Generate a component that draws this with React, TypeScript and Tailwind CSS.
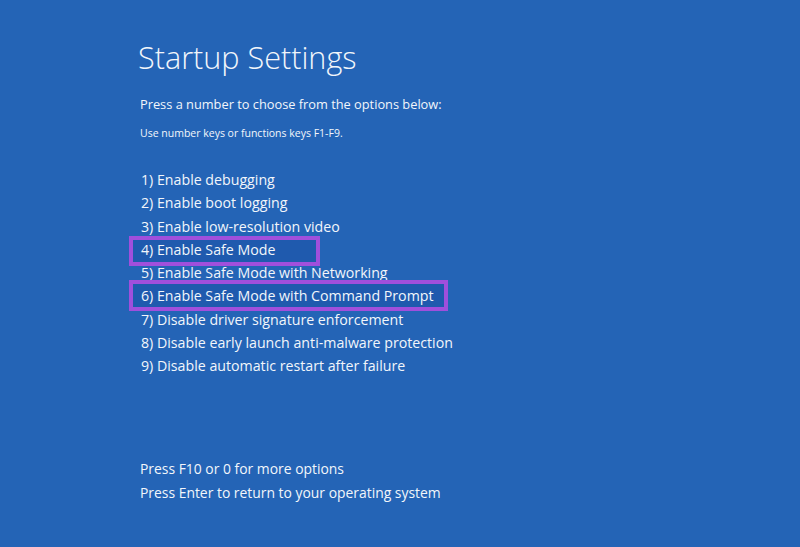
export default function App() {
  const items = [
    "1) Enable debugging",
    "2) Enable boot logging",
    "3) Enable low-resolution video",
    "4) Enable Safe Mode",
    "5) Enable Safe Mode with Networking",
    "6) Enable Safe Mode with Command Prompt",
    "7) Disable driver signature enforcement",
    "8) Disable early launch anti-malware protection",
    "9) Disable automatic restart after failure",
  ];
  return (
    <div
      className="w-[800px] h-[547px] bg-[#2464b6] text-[#f2f6fb] overflow-hidden pl-[138px] pt-[37px] flex flex-col"
      style={{ fontFamily: '"Open Sans", "Noto Sans", sans-serif' }}
    >
      <h1 className="text-[30.6px] leading-[40px] font-[350] whitespace-nowrap">Startup Settings</h1>
      <p className="mt-[17px] ml-[2px] text-[12.8px] leading-[20px] whitespace-nowrap">
        Press a number to choose from the options below:
      </p>
      <p className="mt-[11px] ml-[2px] text-[10.5px] leading-[16px] whitespace-nowrap">
        Use number keys or functions keys F1-F9.
      </p>
      <ul className="mt-[27px] flex flex-col">
        {items.map((t, i) => (
          <li key={i} className="relative h-[23.3px] text-[14.2px] leading-[23.3px] ml-[3px] whitespace-nowrap">
            {i === 3 && (
              <span className="absolute left-[-12px] top-[-2px] w-[191px] h-[30px] border-[4px] border-[#a04fdc] bg-[#1f5aae]" />
            )}
            {i === 5 && (
              <span className="absolute left-[-12px] top-[-4px] w-[319px] h-[31px] border-[4px] border-[#a04fdc] bg-[#1f5aae]" />
            )}
            <span className="relative">{t}</span>
          </li>
        ))}
      </ul>
      <div className="mt-[79px] ml-[2px] flex flex-col">
        <p className="text-[13.9px] leading-[24px] whitespace-nowrap">Press F10 or 0 for more options</p>
        <p className="text-[13.9px] leading-[24px] whitespace-nowrap">Press Enter to return to your operating system</p>
      </div>
    </div>
  );
}
